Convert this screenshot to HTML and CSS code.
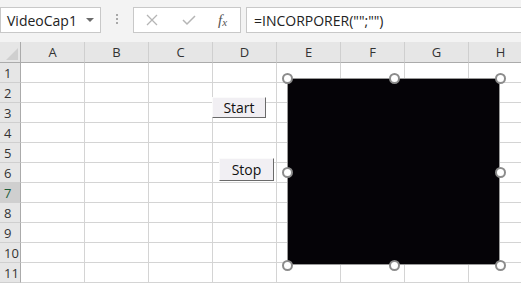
FILE: index.html
```html
<!DOCTYPE html>
<html lang="fr">
<head>
  <meta charset="UTF-8" />
  <title>VideoCap1</title>
  <link rel="stylesheet" href="styles.css">
</head>
<body>

  <!-- Formula bar -->
  <div class="toolbar">
    <div class="namebox">
      <span>VideoCap1</span>
      <svg class="caret" width="8" height="5" viewBox="0 0 8 5"><path d="M0 0 H8 L4 4 Z" fill="#6b6b6b"/></svg>
    </div>
    <div class="grip"><i></i><i></i><i></i></div>
    <div class="fxbox">
      <svg class="cancel" width="12" height="12" viewBox="0 0 12 12"><path d="M1 1 L11 11 M11 1 L1 11" stroke="#b5b5b5" stroke-width="1.3"/></svg>
      <svg class="enter" width="14" height="12" viewBox="0 0 14 12"><path d="M1 6 L5 10 L13 2" stroke="#b5b5b5" stroke-width="1.5" fill="none"/></svg>
      <span class="fx">f<sub>x</sub></span>
    </div>
    <div class="formula">=INCORPORER("";"")</div>
  </div>

  <!-- Sheet -->
  <div class="sheet">
    <div class="grid" id="grid"></div>

    <button class="btn start">Start</button>
    <button class="btn stop">Stop</button>

    <div class="video">
      <span class="handle" style="left:-6px;top:-6px"></span>
      <span class="handle" style="left:101px;top:-6px"></span>
      <span class="handle" style="left:207px;top:-6px"></span>
      <span class="handle" style="left:-6px;top:88px"></span>
      <span class="handle" style="left:207px;top:88px"></span>
      <span class="handle" style="left:-6px;top:181px"></span>
      <span class="handle" style="left:101px;top:181px"></span>
      <span class="handle" style="left:207px;top:181px"></span>
    </div>
  </div>

  <script>
    const grid = document.getElementById('grid');
    const cols = ['A', 'B', 'C', 'D', 'E', 'F', 'G', 'H'];
    let html = '<div class="corner"><i></i></div>';
    cols.forEach(c => html += `<div class="colhead">${c}</div>`);
    for (let r = 1; r <= 11; r++) {
      html += `<div class="rowhead${r === 7 ? ' sel' : ''}">${r}</div>`;
      cols.forEach(() => html += '<div class="cell"></div>');
    }
    grid.innerHTML = html;
  </script>
</body>
</html>
```

FILE: styles.css
```css
body {
  margin: 0;
  width: 521px;
  height: 284px;
  overflow: hidden;
  background: #fff;
  font-family: 'Open Sans', 'Noto Sans', sans-serif;
  color: #222;
}

.toolbar {
  height: 42px;
  background: #f3f3f3;
  display: flex;
  align-items: flex-start;
  padding-top: 7px;
  box-sizing: border-box;
}

.namebox {
  width: 101px;
  height: 26px;
  box-sizing: border-box;
  background: #fff;
  border: 1px solid #c8c8c8;
  display: flex;
  align-items: center;
  justify-content: space-between;
  padding: 0 6px 0 6px;
  font-size: 14px;
  color: #222;
}

.caret {
  margin-top: 1px;
}

.grip {
  width: 32px;
  display: flex;
  flex-direction: column;
  align-items: center;
  gap: 2px;
  padding-top: 7px;
}

.grip i {
  width: 2px;
  height: 2px;
  background: #a8a8a8;
}

.fxbox {
  width: 108px;
  height: 26px;
  box-sizing: border-box;
  background: #fff;
  border: 1px solid #c8c8c8;
  display: flex;
  align-items: center;
  padding-left: 12px;
}

.enter {
  margin-left: 24px;
}

.fx {
  margin-left: 22px;
  font-family: 'Liberation Serif', serif;
  font-style: italic;
  font-size: 15px;
  color: #555;
}

.fx sub {
  font-size: 11px;
  vertical-align: -1px;
}

.formula {
  flex: 1;
  margin-left: 5px;
  height: 26px;
  box-sizing: border-box;
  background: #fff;
  border: 1px solid #c8c8c8;
  border-right: none;
  padding: 3px 0 0 7px;
  font-size: 14px;
  color: #222;
}

.sheet {
  position: relative;
  height: 242px;
}

.grid {
  display: grid;
  grid-template-columns: 21px repeat(8, 64px);
  grid-template-rows: 21px repeat(11, 20px);
  font-size: 13px;
}

.corner {
  background: #e6e6e6;
  border-right: 1px solid #ababab;
  border-bottom: 1px solid #ababab;
  position: relative;
}

.corner i {
  position: absolute;
  right: 2px;
  bottom: 2px;
  width: 0;
  height: 0;
  border-left: 12px solid transparent;
  border-bottom: 12px solid #cfcfcf;
}

.colhead {
  background: #e6e6e6;
  border-right: 1px solid #cfcfcf;
  border-bottom: 1px solid #ababab;
  text-align: center;
  line-height: 21px;
  color: #333;
}

.rowhead {
  background: #e6e6e6;
  border-right: 1px solid #ababab;
  border-bottom: 1px solid #cfcfcf;
  padding-left: 4px;
  line-height: 20px;
  color: #333;
}

.rowhead.sel {
  background: #cfcfcf;
  color: #1e5e3a;
}

.cell {
  background: #fff;
  border-right: 1px solid #d4d4d4;
  border-bottom: 1px solid #d4d4d4;
}

.btn {
  position: absolute;
  margin: 0;
  padding: 0;
  box-sizing: border-box;
  background: #f1eff3;
  border: 1px solid;
  border-color: #fbfbfb #6a6a6a #6a6a6a #fbfbfb;
  font-family: 'Open Sans', 'Noto Sans', sans-serif;
  font-size: 14px;
  color: #111;
}

.start {
  left: 212px;
  top: 55px;
  width: 54px;
  height: 21px;
}

.stop {
  left: 219px;
  top: 116px;
  width: 55px;
  height: 23px;
}

.video {
  position: absolute;
  left: 287px;
  top: 36px;
  width: 213px;
  height: 187px;
  box-sizing: border-box;
  background: #050307;
  border: 1px solid #9a9a9a;
}

.handle {
  position: absolute;
  width: 11px;
  height: 11px;
  box-sizing: border-box;
  border-radius: 50%;
  background: #fff;
  border: 2px solid #8c8c8c;
}
```
